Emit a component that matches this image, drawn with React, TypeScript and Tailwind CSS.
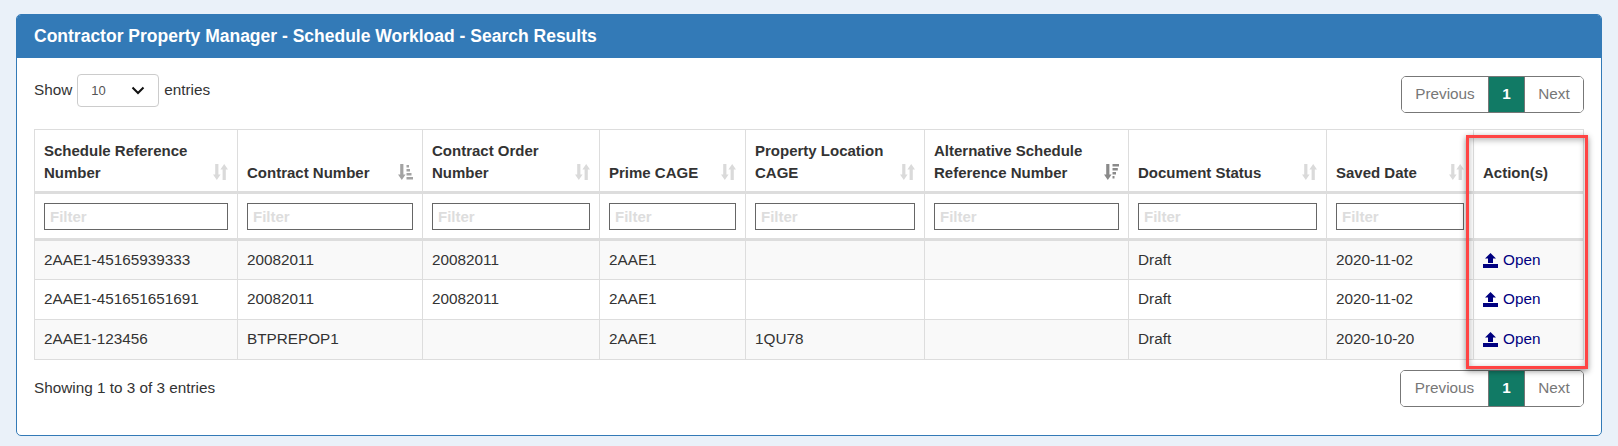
import React from "react";

const SortBoth = () => (
  <svg width="15" height="16" viewBox="0 0 15 16" className="shrink-0 mb-[4px]" fill="#dadada">
    <path d="M2.200 0h3.200v10.500H7.600L3.800 16 0 10.500h2.200z" />
    <path d="M11.200 0 15 5.500h-2.200V16H9.600V5.500H7.400z" />
  </svg>
);
const SortAlpha = () => (
  <svg width="15" height="16" viewBox="0 0 15 16" className="shrink-0 mb-[4px]" fill="#a3a3a3">
    <path d="M2.200 0h3.200v10.500H7.600L3.800 16 0 10.500h2.200z" />
    <path d="M8.500 1h2.500v2.500H8.500zM8.500 5h3.500v2.500H8.500zM8.500 9H13.500v2.500H8.500zM8.500 13H15v2.500H8.500z" />
  </svg>
);
const SortAltDesc = () => (
  <svg width="15" height="16" viewBox="0 0 15 16" className="shrink-0 mb-[4px]" fill="#8a8a8a">
    <path d="M2.200 0h3.200v10.500H7.600L3.800 16 0 10.500h2.200z" />
    <path d="M8.500 0H15v2.500H8.500zM8.500 4H13.800v2.500H8.500zM8.500 8H12v2.500H8.500zM8.500 12H10.500v2.500H8.500z" />
  </svg>
);
const Upload = () => (
  <svg width="15" height="15" viewBox="0 0 15 15" fill="#000080" className="shrink-0">
    <path d="M7.500 0 13 5.500H10V10H5V5.500H2z" />
    <path d="M0 11h15v4H0z" />
  </svg>
);

const Pager = ({ w }: { w: string }) => (
  <div className={`flex h-[37px] ${w} border border-[#777] rounded-[5px] overflow-hidden text-[15.300px] text-[#777]`}>
    <div className="flex-1 flex items-center justify-center bg-white">Previous</div>
    <div className="w-[37px] flex items-center justify-center bg-[#117a65] text-white font-bold border-x border-[#777]">1</div>
    <div className="w-[58px] flex items-center justify-center bg-white">Next</div>
  </div>
);

const heads: [string, "both" | "alpha" | "alt" | "none"][] = [
  ["Schedule Reference Number", "both"],
  ["Contract Number", "alpha"],
  ["Contract Order Number", "both"],
  ["Prime CAGE", "both"],
  ["Property Location CAGE", "both"],
  ["Alternative Schedule Reference Number", "alt"],
  ["Document Status", "both"],
  ["Saved Date", "both"],
  ["Action(s)", "none"],
];

const widths = [203, 185, 177, 146, 179, 204, 198, 147, 110];

const rows = [
  ["2AAE1-45165939333", "20082011", "20082011", "2AAE1", "", "", "Draft", "2020-11-02"],
  ["2AAE1-451651651691", "20082011", "20082011", "2AAE1", "", "", "Draft", "2020-11-02"],
  ["2AAE1-123456", "BTPREPOP1", "", "2AAE1", "1QU78", "", "Draft", "2020-10-20"],
];

export default function App() {
  return (
    <div className="min-h-[446px] bg-[#eaf1f9] pt-[14px] px-[16px] font-['Liberation_Sans',Arial,sans-serif] text-[15.300px] text-[#333]">
      <div className="h-[422px] bg-white border border-[#337ab7] rounded-[5px] overflow-hidden">
        <div className="h-[43px] bg-[#337ab7] flex items-center pl-[17px] text-white font-bold text-[17.500px]">
          Contractor Property Manager - Schedule Workload - Search Results
        </div>
        <div className="pl-[17px] pr-[17px] pt-[16px]">
          <div className="flex justify-between items-start">
            <div className="flex items-center gap-[5px] h-[33px]">
              <span>Show</span>
              <div className="w-[82px] h-[33px] border border-[#ccc] rounded-[4px] flex items-center justify-between pl-[13px] pr-[13px] text-[13px] text-[#555]">
                <span>10</span>
                <svg width="14" height="9" viewBox="0 0 14 9" fill="none" stroke="#111" strokeWidth="2">
                  <path d="M1.500 1.500 7 7l5.500-5.500" />
                </svg>
              </div>
              <span>entries</span>
            </div>
            <div className="mt-[2px]">
              <Pager w="w-[183px]" />
            </div>
          </div>
          <div className="relative mt-[16px]">
            <table className="table-fixed border-collapse w-[1549px]">
              <colgroup>
                {widths.map((w, i) => (
                  <col key={i} style={{ width: w }} />
                ))}
              </colgroup>
              <thead>
                <tr className="h-[63px]">
                  {heads.map(([t, s], i) => (
                    <th key={i} className="border border-[#ddd] border-b-[3px] align-bottom text-left p-0 pl-[9px] pr-[9px] pb-[7px] text-[15px] leading-[22px] font-bold text-[#333]">
                      <div className="flex items-end justify-between">
                        <span className="max-w-[165px]">{t}</span>
                        {s === "both" && <SortBoth />}
                        {s === "alpha" && <SortAlpha />}
                        {s === "alt" && <SortAltDesc />}
                      </div>
                    </th>
                  ))}
                </tr>
                <tr className="h-[47px]">
                  {heads.map(([t], i) => (
                    <th key={i} className="border border-[#ddd] border-b-[3px] px-[9px] py-0 font-normal">
                      {i < 8 && (
                        <input
                          readOnly
                          placeholder="Filter"
                          className="block w-full h-[27px] border border-[#666] px-[5px] text-[15px] font-bold placeholder:text-[#ddd] outline-none"
                        />
                      )}
                    </th>
                  ))}
                </tr>
              </thead>
              <tbody>
                {rows.map((r, i) => (
                  <tr key={i} className={`h-[40px] ${i % 2 === 0 ? "bg-[#f9f9f9]" : "bg-white"}`}>
                    {r.map((c, j) => (
                      <td key={j} className="border border-[#ddd] px-[9px] py-0 text-[#333]">
                        {c}
                      </td>
                    ))}
                    <td className="border border-[#ddd] px-[9px] py-0">
                      <a className="flex items-center gap-[5px] text-[#000080]">
                        <Upload />
                        Open
                      </a>
                    </td>
                  </tr>
                ))}
              </tbody>
            </table>
            <div className="absolute left-[1432px] top-[6px] w-[122px] h-[234px] border-[3px] border-[#f44] shadow-[0_2px_6px_rgba(0,0,0,0.45),inset_0_2px_6px_rgba(0,0,0,0.3)] pointer-events-none" />
          </div>
          <div className="flex justify-between items-center mt-[10px]">
            <span>Showing 1 to 3 of 3 entries</span>
            <Pager w="w-[184px]" />
          </div>
        </div>
      </div>
    </div>
  );
}
